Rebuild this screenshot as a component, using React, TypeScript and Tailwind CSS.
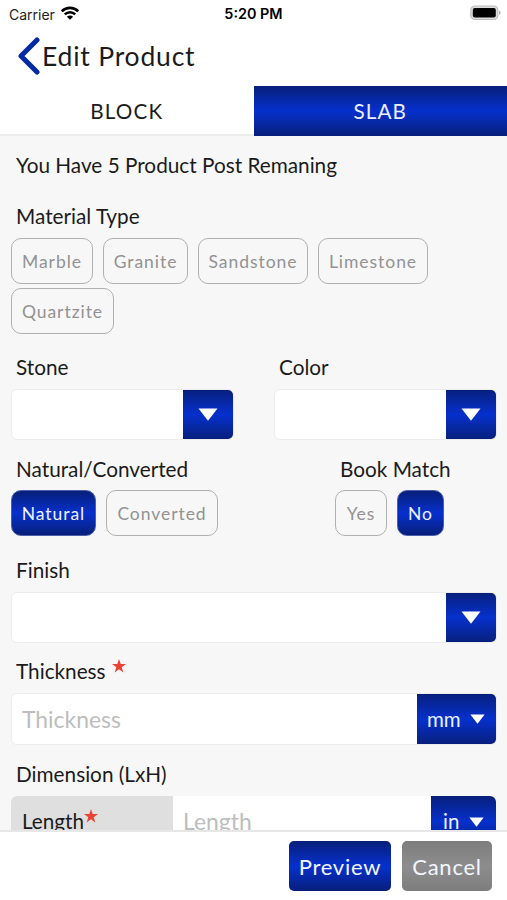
import type { ReactNode } from "react";

const BLUE = "bg-[linear-gradient(to_bottom,#071f79_0%,#0630cd_50%,#071f79_100%)]";

function Label({ children }: { children: ReactNode }) {
  return <div className="flex h-[27px] items-center whitespace-pre pl-[5px] pt-[2px] text-[20.75px] leading-[27px]">{children}</div>;
}

function Chip({ text, width, active = false }: { text: string; width: string; active?: boolean }) {
  return (
    <div
      className={`flex h-[46px] shrink-0 items-center justify-center rounded-[10px] border pt-[3px] text-[17.5px] tracking-[0.95px] ${width} ${
        active ? `border-[#4a5fae] text-[#eef1ff] ${BLUE}` : "border-[#b0b0b0] text-[#929292]"
      }`}
    >
      {text}
    </div>
  );
}

function Triangle({ small = false }: { small?: boolean }) {
  return (
    <svg className={small ? "h-[10px] w-[15px]" : "mr-px h-[13px] w-[20px]"} viewBox="0 0 20 13" preserveAspectRatio="none">
      <path d="M0.5 0.5h19L10 12.8z" fill="#fff" />
    </svg>
  );
}

function Star() {
  return (
    <svg className="h-[14px] w-[14px]" viewBox="0 0 24 24">
      <path d="M12 0l2.9 8.6H24l-7.3 5.5 2.7 8.9L12 17.7 4.6 23l2.7-8.9L0 8.6h9.1z" fill="#ea4335" />
    </svg>
  );
}

function Select({ width }: { width: string }) {
  return (
    <div className={`flex h-[51px] overflow-hidden rounded-[6px] border border-[#ececec] bg-white ${width}`}>
      <div className="flex-1" />
      <div className={`-my-px -mr-px flex w-[51px] items-center justify-center ${BLUE}`}>
        <Triangle />
      </div>
    </div>
  );
}

export default function App() {
  return (
    <div className="flex h-[900px] w-[507px] flex-col overflow-hidden bg-white font-['Lato',sans-serif] text-[#1b1b1b]">
      <div className="grid h-[28px] shrink-0 grid-cols-3 items-center font-['Inter',sans-serif] text-[14px] text-[#222]">
        <div className="flex items-center gap-[6px] pl-[9px]">
          <span>Carrier</span>
          <svg className="mb-[2px] h-[14px] w-[18px]" viewBox="0 0 18 14" fill="none" stroke="#000" strokeWidth="2.6">
            <path d="M0.8 5.2a11.7 11.7 0 0 1 16.4 0" />
            <path d="M3.8 8.4a7.4 7.4 0 0 1 10.4 0" />
            <path d="M9 13.8L5.9 10.7a4.4 4.4 0 0 1 6.2 0z" fill="#000" stroke="none" />
          </svg>
        </div>
        <div className="text-center text-[14.4px] font-semibold text-black">5:20 PM</div>
        <div className="flex justify-end pr-[6px]">
          <svg className="mb-[2px] h-[16px] w-[31px]" viewBox="0 0 31 16">
            <rect x="0.8" y="1" width="27" height="13.5" rx="4" fill="#ddd" stroke="#bdbdbd" strokeWidth="1.2" />
            <rect x="2.8" y="3" width="23" height="9.5" rx="2" fill="#000" />
            <path d="M29 5.5q3 2.2 0 4.5z" fill="#aaa" />
          </svg>
        </div>
      </div>

      <div className="flex h-[58px] shrink-0 items-center pb-[3px] pl-[18px]">
        <svg className="h-[38px] w-[22px]" viewBox="0 0 22 38" fill="none" stroke="#0429a5" strokeWidth="5" strokeLinecap="round" strokeLinejoin="round">
          <path d="M19 3L3 19 19 35" />
        </svg>
        <h1 className="pl-[2px] text-[26.5px] leading-[34px] tracking-[0.8px]">Edit Product</h1>
      </div>

      <div className="flex h-[50px] shrink-0 text-[20.7px] tracking-[1.1px]">
        <div className="flex flex-1 items-center justify-center border-b-2 border-[#ededed] pt-[4px]">BLOCK</div>
        <div className={`flex flex-1 items-center justify-center pt-px text-[#eaf0ff] ${BLUE}`}>SLAB</div>
      </div>

      <main className="min-h-0 flex-1 overflow-hidden bg-[#f7f7f7] pl-[11px] pr-[10px] pt-[15px]">
        <Label>You Have 5 Product Post Remaning</Label>
        <div className="mt-[24px]">
          <Label>Material Type</Label>
        </div>
        <div className="mt-[9px] flex flex-wrap gap-x-[10px] gap-y-[4px]">
          <Chip text="Marble" width="w-[82px]" />
          <Chip text="Granite" width="w-[85px]" />
          <Chip text="Sandstone" width="w-[110px]" />
          <Chip text="Limestone" width="w-[110px]" />
          <Chip text="Quartzite" width="w-[103px]" />
        </div>

        <div className="mt-[19px] flex justify-between">
          <div>
            <Label>Stone</Label>
            <div className="mt-[9px]">
              <Select width="w-[223px]" />
            </div>
          </div>
          <div>
            <Label>Color</Label>
            <div className="mt-[9px]">
              <Select width="w-[223px]" />
            </div>
          </div>
        </div>

        <div className="mt-[15px] flex justify-between pr-[52px]">
          <div>
            <Label>Natural/Converted</Label>
            <div className="mt-[8px] flex gap-[10px]">
              <Chip text="Natural" width="w-[85px]" active />
              <Chip text="Converted" width="w-[112px]" />
            </div>
          </div>
          <div className="w-[110px]">
            <Label>Book Match</Label>
            <div className="mt-[8px] flex gap-[10px]">
              <Chip text="Yes" width="w-[52px]" />
              <Chip text="No" width="w-[47px]" active />
            </div>
          </div>
        </div>

        <div className="mt-[20px]">
          <Label>Finish</Label>
        </div>
        <div className="mt-[9px]">
          <Select width="w-full" />
        </div>

        <div className="mt-[14px]">
          <Label>
            <span>Thickness</span>
            <span className="mb-[11px] ml-[6px]">
              <Star />
            </span>
          </Label>
        </div>
        <div className="mt-[9px] flex h-[52px] overflow-hidden rounded-[6px] border border-[#ececec] bg-white">
          <div className="flex flex-1 items-center pl-[10px] text-[22.9px] text-[#bdbdbd]">Thickness</div>
          <div className={`-my-px -mr-px flex w-[80px] items-center justify-between pl-[10px] pr-[12px] text-[20.5px] text-[#eaf0ff] ${BLUE}`}>
            <span>mm</span>
            <Triangle small />
          </div>
        </div>

        <div className="mt-[15px]">
          <Label>Dimension (LxH)</Label>
        </div>
        <div className="mr-px mt-[9px] flex h-[51px] overflow-hidden rounded-t-[6px] bg-white">
          <div className="flex w-[162px] items-center bg-[#dfdfdf] pl-[11px] text-[20.7px]">
            <span>Length</span>
            <span className="mb-[12px]">
              <Star />
            </span>
          </div>
          <div className="flex flex-1 items-center pl-[10px] text-[22.9px] text-[#bdbdbd]">Length</div>
          <div className={`flex w-[65px] items-center justify-between pl-[12px] pr-[12px] text-[20.5px] text-[#eaf0ff] ${BLUE}`}>
            <span>in</span>
            <Triangle small />
          </div>
        </div>
      </main>

      <footer className="flex h-[70px] shrink-0 justify-end gap-[11px] border-t-2 border-[#e7e7e7] pr-[15px] pt-[9px] text-[22px] tracking-[0.75px] text-[#f3f5ff]">
        <div className={`flex h-[50px] w-[102px] items-center justify-center rounded-[5px] ${BLUE}`}>Preview</div>
        <div className="flex h-[50px] w-[90px] items-center justify-center rounded-[5px] bg-[linear-gradient(to_bottom,#7d7d7d,#8d8d8d_50%,#7d7d7d)]">Cancel</div>
      </footer>
    </div>
  );
}
